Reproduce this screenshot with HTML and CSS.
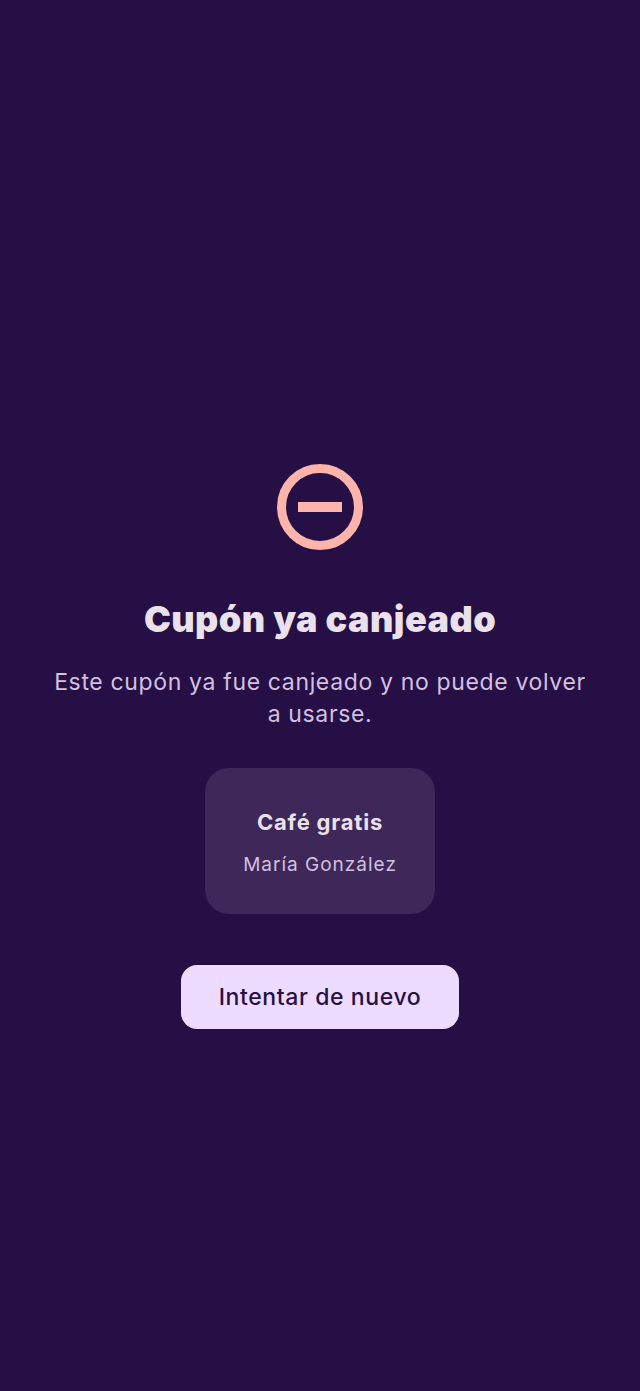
FILE: index.html
```html
<!DOCTYPE html>
<html lang="es">
<head>
    <meta charset="UTF-8">
    <meta name="viewport" content="width=device-width, initial-scale=1.0">
    <title>Cupón ya canjeado</title>
    <link rel="stylesheet" href="styles.css">
</head>
<body>

<div class="container">
    <svg class="icon" width="86" height="86" viewBox="0 0 86 86" aria-hidden="true">
        <circle cx="43" cy="43" r="38.5" fill="none" stroke="#ffb4ab" stroke-width="9"/>
        <rect x="21" y="38" width="44" height="10" fill="#ffb4ab"/>
    </svg>
    <h1 class="title">Cupón ya canjeado</h1>
    <p class="message">Este cupón ya fue canjeado y no puede volver a usarse.</p>
    <div class="card">
        <div class="card-title">Café gratis</div>
        <div class="card-name">María González</div>
    </div>
    <button class="retry">Intentar de nuevo</button>
</div>

</body>
</html>
```

FILE: styles.css
```css
body {
    font-family: 'Inter', 'Open Sans', sans-serif;
    margin: 0;
    padding: 101px 0 0;
    box-sizing: border-box;
    display: flex;
    flex-direction: column;
    align-items: center;
    justify-content: center;
    height: 100vh;
    background-color: #260f45;
}
.container {
    display: flex;
    flex-direction: column;
    align-items: center;
    width: 560px;
}
.icon {
    display: block;
}
.title {
    margin: 46px 0 0;
    font-size: 36px;
    line-height: 46px;
    font-weight: 900;
    letter-spacing: 0.45px;
    color: #ebe1ea;
}
.message {
    margin: 24px 0 0;
    max-width: 540px;
    font-size: 23px;
    line-height: 32px;
    letter-spacing: 0.65px;
    text-align: center;
    color: #d3c0e0;
}
.card {
    margin-top: 38px;
    width: 230px;
    height: 146px;
    box-sizing: border-box;
    padding-top: 38px;
    border-radius: 24px;
    background: #3e2759;
    text-align: center;
}
.card-title {
    font-size: 22px;
    line-height: 32px;
    font-weight: 700;
    letter-spacing: 0.8px;
    color: #ebe1ea;
}
.card-name {
    margin-top: 15px;
    font-size: 19px;
    line-height: 24px;
    letter-spacing: 1px;
    color: #d3c0e0;
}
.retry {
    margin-top: 51px;
    width: 278px;
    height: 64px;
    padding: 0;
    border: 0;
    border-radius: 16px;
    background: #eddcff;
    font-family: inherit;
    font-size: 23px;
    font-weight: 500;
    letter-spacing: 0.6px;
    color: #260f45;
}
```
